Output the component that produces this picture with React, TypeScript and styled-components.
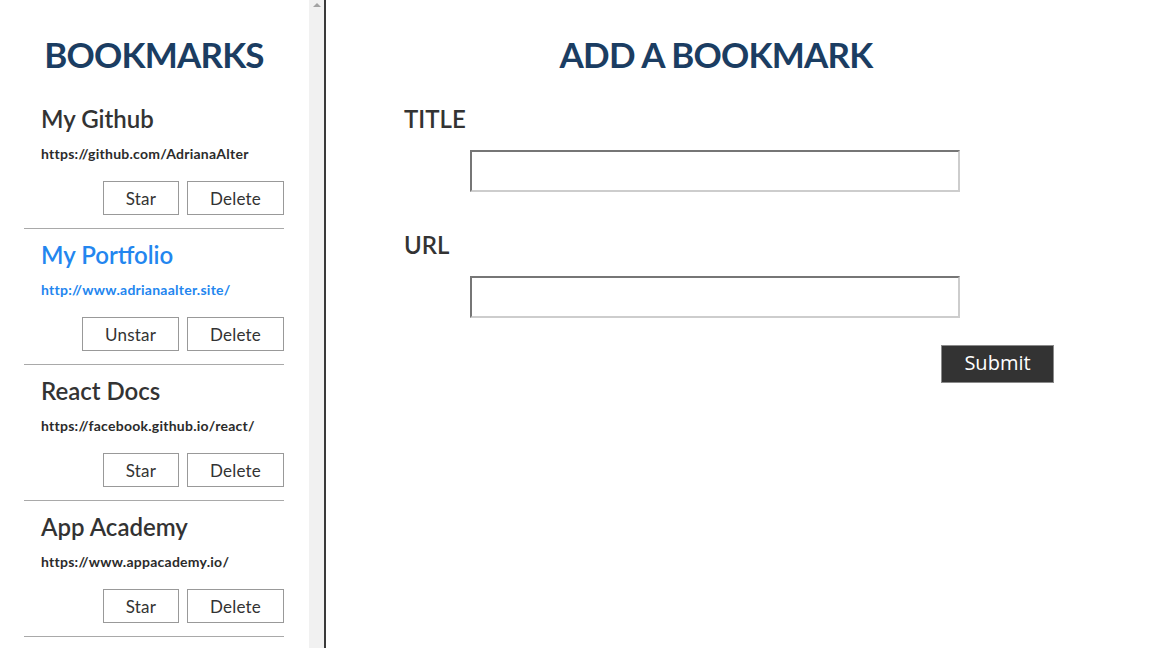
import React from "react";
import styled, { createGlobalStyle } from "styled-components";

const GlobalStyle = createGlobalStyle`
  html, body { margin: 0; padding: 0; background: #fff; }
  body { font-family: Lato, "Noto Sans", sans-serif; color: #333; }
  * { box-sizing: border-box; }
`;

const Page = styled.div`
  display: flex;
  height: 100vh;
  overflow: hidden;
`;

const Sidebar = styled.aside`
  display: flex;
  flex: 0 0 326px;
  height: 100%;
  border-right: 2px solid #3a3a3a;
`;

const ListPane = styled.div`
  flex: 0 0 309px;
  height: 100%;
  overflow: hidden;
  padding: 0 25px 0 24px;
`;

const ScrollTrack = styled.div`
  flex: 0 0 15px;
  height: 100%;
  background: #f1f1f1;
  display: flex;
  justify-content: center;
  padding-top: 3px;
`;

const ScrollArrow = styled.div`
  width: 0;
  height: 0;
  border-left: 4px solid transparent;
  border-right: 4px solid transparent;
  border-bottom: 4px solid #a3a3a3;
`;

const Heading = styled.h1<{ $width?: number }>`
  margin: 32px 0 0;
  font-family: Lato, sans-serif;
  font-weight: 700;
  font-size: 35px;
  letter-spacing: -0.8px;
  line-height: 44px;
  color: #1b3d62;
  text-align: center;
  ${(p) => (p.$width ? `width: ${p.$width}px;` : "")}
`;

const List = styled.ul`
  list-style: none;
  margin: 17px 0 0;
  padding: 0;
`;

const Item = styled.li`
  padding: 11px 0 13px 17px;
  border-bottom: 1px solid #a9a9a9;
  display: flex;
  flex-direction: column;
`;

const ItemTitle = styled.h2<{ $starred?: boolean }>`
  margin: 0;
  font-family: Lato, sans-serif;
  font-weight: 600;
  font-size: 24px;
  line-height: 30px;
  color: ${(p) => (p.$starred ? "#2386ef" : "#333")};
`;

const ItemUrl = styled.div<{ $starred?: boolean }>`
  margin-top: 12px;
  font-family: Lato, sans-serif;
  font-weight: 700;
  font-size: 14px;
  letter-spacing: 0.25px;
  line-height: 16px;
  color: ${(p) => (p.$starred ? "#2386ef" : "#2b2b2b")};
`;

const Actions = styled.div`
  margin-top: 19px;
  display: flex;
  justify-content: flex-end;
  gap: 8px;
`;

const OutlineButton = styled.button`
  height: 34px;
  padding: 0 22px;
  background: #fff;
  border: 1px solid #999;
  font-family: Lato, sans-serif;
  font-size: 17px;
  color: #333;
  letter-spacing: 0.2px;
  cursor: pointer;
`;

const Main = styled.main`
  flex: 1;
  padding-left: 78px;
`;

const Form = styled.form`
  width: 650px;
  display: flex;
  flex-direction: column;
`;

const Label = styled.label<{ $gap: number }>`
  margin-top: ${(p) => p.$gap}px;
  font-family: Lato, sans-serif;
  font-weight: 600;
  font-size: 24px;
  line-height: 30px;
  color: #333;
`;

const Input = styled.input`
  margin: 16px 0 0 66px;
  width: 490px;
  height: 42px;
  border-top: 2px solid #767676;
  border-left: 2px solid #767676;
  border-right: 2px solid #cdcdcd;
  border-bottom: 2px solid #cdcdcd;
  background: #fff;
  font-size: 16px;
  outline: none;
`;

const SubmitRow = styled.div`
  margin-top: 27px;
  display: flex;
  justify-content: flex-end;
`;

const SubmitButton = styled.button`
  width: 113px;
  height: 38px;
  background: #333;
  border: 1px solid #8a8a8a;
  color: #fff;
  font-family: "Open Sans", sans-serif;
  font-size: 20px;
  line-height: 1;
  padding: 0 0 2px;
  cursor: pointer;
`;

const bookmarks = [
  { title: "My Github", url: "https://github.com/AdrianaAlter", starred: false },
  { title: "My Portfolio", url: "http://www.adrianaalter.site/", starred: true },
  { title: "React Docs", url: "https://facebook.github.io/react/", starred: false },
  { title: "App Academy", url: "https://www.appacademy.io/", starred: false },
];

export default function App() {
  return (
    <>
      <GlobalStyle />
      <Page>
        <Sidebar>
          <ListPane>
            <Heading>BOOKMARKS</Heading>
            <List>
              {bookmarks.map((b) => (
                <Item key={b.title}>
                  <ItemTitle $starred={b.starred}>{b.title}</ItemTitle>
                  <ItemUrl $starred={b.starred}>{b.url}</ItemUrl>
                  <Actions>
                    <OutlineButton type="button">{b.starred ? "Unstar" : "Star"}</OutlineButton>
                    <OutlineButton type="button">Delete</OutlineButton>
                  </Actions>
                </Item>
              ))}
            </List>
          </ListPane>
          <ScrollTrack>
            <ScrollArrow />
          </ScrollTrack>
        </Sidebar>
        <Main>
          <Form onSubmit={(e) => e.preventDefault()}>
            <Heading $width={624}>ADD A BOOKMARK</Heading>
            <Label $gap={28} htmlFor="title">TITLE</Label>
            <Input id="title" type="text" />
            <Label $gap={38} htmlFor="url">URL</Label>
            <Input id="url" type="text" />
            <SubmitRow>
              <SubmitButton type="submit">Submit</SubmitButton>
            </SubmitRow>
          </Form>
        </Main>
      </Page>
    </>
  );
}
